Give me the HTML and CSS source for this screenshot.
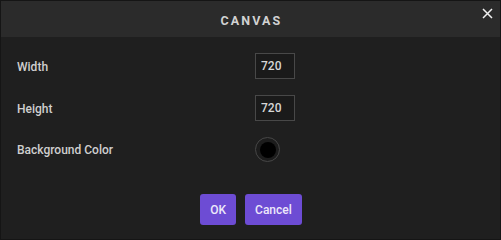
FILE: index.html
```html
<!DOCTYPE html>
<html>
<head>
<meta charset="utf-8">
<link rel="stylesheet" href="styles.css">
</head>
<body>
<div class="dialog">
  <div class="header">
    <div class="title">CANVAS</div>
    <button class="close" aria-label="Close">
      <svg width="11" height="11" viewBox="0 0 11 11"><path d="M1 1L10 10M10 1L1 10" stroke="#f0f0f0" stroke-width="1.5" fill="none"/></svg>
    </button>
  </div>
  <div class="body">
    <div class="form">
      <label class="label">Width</label>
      <div class="field"><input class="num" type="text" value="720"></div>
      <label class="label">Height</label>
      <div class="field"><input class="num" type="text" value="720"></div>
      <label class="label">Background Color</label>
      <div class="field"><span class="swatch"><span class="swatch-dot"></span></span></div>
    </div>
    <div class="actions">
      <button class="btn">OK</button>
      <button class="btn">Cancel</button>
    </div>
  </div>
</div>
</body>
</html>
```
FILE: styles.css
```css
html, body {
  margin: 0;
  padding: 0;
  background: #1f1f1f;
}
body {
  width: 501px;
  height: 240px;
  font-family: Roboto, "Liberation Sans", sans-serif;
}
.dialog {
  box-sizing: border-box;
  width: 501px;
  height: 240px;
  border: 1px solid #151515;
  display: flex;
  flex-direction: column;
  background: #1f1f1f;
}
.header {
  position: relative;
  height: 36px;
  background: #2b2b2b;
  display: flex;
  align-items: center;
  justify-content: center;
  flex: none;
}
.title {
  color: #d2d2d2;
  font-size: 12.5px;
  font-weight: 700;
  letter-spacing: 2.1px;
  padding-left: 2px;
  margin-top: 2px;
}
.close {
  position: absolute;
  right: 6px;
  top: 6px;
  width: 13px;
  height: 13px;
  padding: 0;
  border: 0;
  background: none;
  display: flex;
  align-items: center;
  justify-content: center;
}
.body {
  flex: 1;
  display: flex;
  flex-direction: column;
  padding: 16px 16px 0 16px;
}
.form {
  display: grid;
  grid-template-columns: 238px auto;
  row-gap: 16px;
  align-items: center;
}
.label {
  color: #cfcfcf;
  font-size: 12px;
  font-weight: 500;
  padding-top: 1px;
}
.field {
  display: flex;
  align-items: center;
}
.num {
  box-sizing: border-box;
  width: 40px;
  height: 26px;
  background: #1a1a1a;
  border: 1px solid #484848;
  color: #d6d6d6;
  font-family: Roboto, "Liberation Sans", sans-serif;
  font-size: 12px;
  font-weight: 500;
  padding: 0 0 0 5px;
  outline: none;
  border-radius: 0;
}
.swatch {
  box-sizing: border-box;
  width: 25px;
  height: 25px;
  border-radius: 50%;
  border: 1px solid #474747;
  background: #1c1c1c;
  display: flex;
  align-items: center;
  justify-content: center;
}
.swatch-dot {
  width: 16px;
  height: 16px;
  border-radius: 50%;
  background: #000;
}
.actions {
  display: flex;
  justify-content: center;
  gap: 9px;
  margin-top: 32px;
  padding-left: 1px;
}
.btn {
  height: 31px;
  padding: 0 10px;
  border: 0;
  border-radius: 3px;
  background: #6d4cd4;
  color: #ece8fa;
  font-family: Roboto, "Liberation Sans", sans-serif;
  font-size: 12px;
  font-weight: 500;
}
```
